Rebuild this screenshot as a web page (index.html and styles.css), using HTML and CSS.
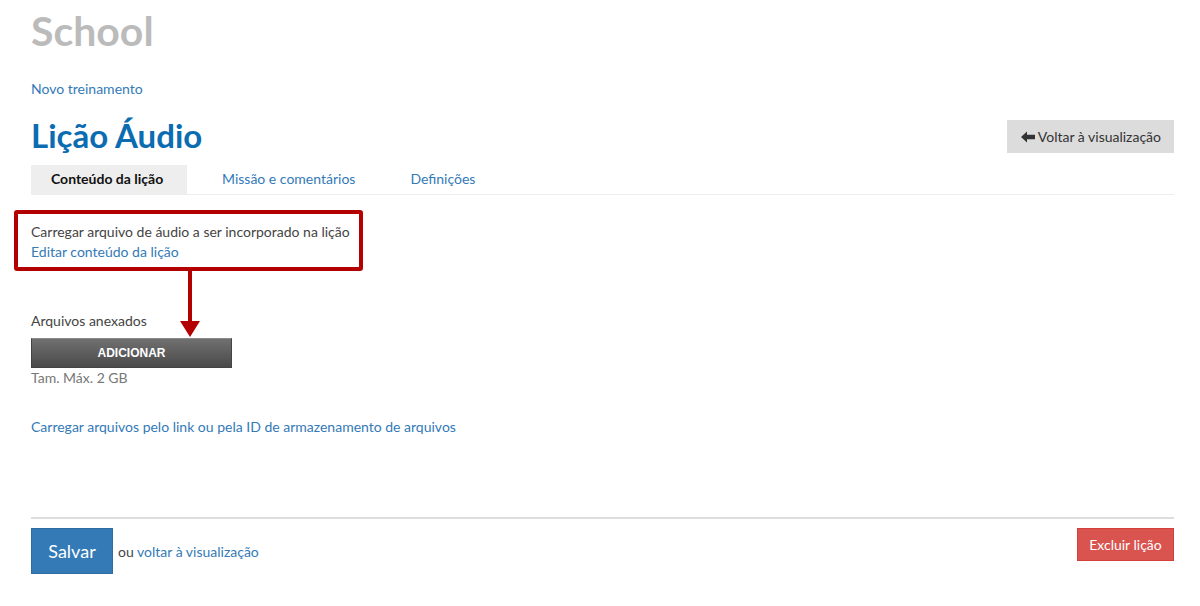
FILE: index.html
```html
<!DOCTYPE html>
<html lang="pt">
<head>
<meta charset="utf-8">
<title>Lição Áudio</title>
<link rel="stylesheet" href="styles.css">
</head>
<body>
<div class="page">
  <h1 class="brand">School</h1>
  <a class="crumb" href="#">Novo treinamento</a>
  <div class="title-row">
    <h2 class="lesson-title">Lição Áudio</h2>
    <a class="back-btn" href="#"><svg class="arrow-left" viewBox="0 0 14 12" width="14" height="12"><path d="M0 6 L6 0.5 L6 3.8 L14 3.8 L14 8.2 L6 8.2 L6 11.5 Z" fill="#333"/></svg>Voltar à visualização</a>
  </div>
  <nav class="tabs">
    <a class="tab active" href="#">Conteúdo da lição</a>
    <a class="tab" href="#">Missão e comentários</a>
    <a class="tab" href="#">Definições</a>
  </nav>
  <div class="content">
    <div class="intro">
      <p class="desc">Carregar arquivo de áudio a ser incorporado na lição</p>
      <a class="link" href="#">Editar conteúdo da lição</a>
      <div class="annot-box"></div>
      <div class="annot-stem"></div>
      <div class="annot-head"></div>
    </div>
    <div class="attachments">
      <p class="label">Arquivos anexados</p>
      <button class="add-btn" type="button">ADICIONAR</button>
      <p class="hint">Tam. Máx. 2 GB</p>
    </div>
    <a class="link upload-link" href="#">Carregar arquivos pelo link ou pela ID de armazenamento de arquivos</a>
  </div>
  <div class="footer">
    <div class="footer-left">
      <button class="save-btn" type="button">Salvar</button>
      <span class="or">ou <a class="link" href="#">voltar à visualização</a></span>
    </div>
    <button class="delete-btn" type="button">Excluir lição</button>
  </div>
</div>
</body>
</html>
```
FILE: styles.css
```css
* { box-sizing: border-box; }
html, body { margin: 0; padding: 0; background: #fff; }
body {
  font-family: Lato, "Liberation Sans", sans-serif;
  font-size: 14px;
  color: #444;
}
a { text-decoration: none; color: #337ab7; }
p { margin: 0; }
.page {
  width: 1143px;
  margin-left: 31px;
}
.brand {
  margin: 0;
  padding-top: 9px;
  font-size: 41px;
  line-height: 44px;
  font-weight: 700;
  color: #bbbbbb;
}
.crumb {
  display: block;
  margin-top: 27px;
  font-size: 14px;
  line-height: 18px;
}
.title-row {
  display: flex;
  justify-content: space-between;
  align-items: flex-start;
  margin-top: 19px;
}
.lesson-title {
  margin: 0;
  font-size: 33px;
  line-height: 36px;
  font-weight: 700;
  color: #0b6cb1;
}
.back-btn {
  display: flex;
  align-items: center;
  gap: 3px;
  height: 33px;
  margin-top: 3px;
  padding: 0 13px 0 14px;
  background: #dcdcdc;
  color: #333;
  font-size: 14px;
}
.tabs {
  display: flex;
  margin-top: 12px;
  border-bottom: 1px solid #eeeeee;
}
.tab {
  height: 29px;
  line-height: 28px;
  font-size: 14px;
}
.tab.active {
  background: #eeeeee;
  color: #111;
  font-weight: 700;
  width: 156px;
  padding: 0 0 0 20px;
  margin-right: 35px;
}
.tab:nth-child(2) { padding: 0 55px 0 0; }
.tab:nth-child(3) { padding: 0; }
.content { padding-top: 27px; }
.intro {
  position: relative;
  line-height: 20px;
}
.annot-box {
  position: absolute;
  left: -17px;
  top: -12px;
  width: 349px;
  height: 61px;
  border: 4px solid #b30000;
  border-radius: 3px;
}
.annot-stem {
  position: absolute;
  left: 157px;
  top: 46px;
  width: 4px;
  height: 56px;
  background: #b30000;
}
.annot-head {
  position: absolute;
  left: 149px;
  top: 99px;
  width: 0;
  height: 0;
  border-left: 10px solid transparent;
  border-right: 10px solid transparent;
  border-top: 16px solid #b30000;
}
.attachments { margin-top: 49px; }
.label { line-height: 20px; }
.add-btn {
  display: block;
  width: 201px;
  height: 30px;
  margin-top: 7px;
  border: 1px solid #444;
  border-top-color: #8a8a8a;
  background: linear-gradient(#707070, #4a4a4a);
  color: #fff;
  font-family: "Liberation Sans", Arial, sans-serif;
  font-weight: 700;
  font-size: 12px;
  cursor: pointer;
}
.hint { color: #777; line-height: 20px; }
.upload-link {
  display: block;
  margin-top: 29px;
  line-height: 20px;
}
.footer {
  display: flex;
  justify-content: space-between;
  align-items: flex-start;
  margin-top: 80px;
  padding-top: 9px;
  border-top: 2px solid #dddddd;
}
.footer-left {
  display: flex;
  align-items: center;
  gap: 5px;
}
.save-btn {
  width: 82px;
  height: 46px;
  border: 1px solid #2e6da4;
  background: #337ab7;
  color: #fff;
  font-family: Lato, "Liberation Sans", sans-serif;
  font-size: 18px;
}
.delete-btn {
  width: 97px;
  height: 33px;
  border: 1px solid #d43f3a;
  background: #d9534f;
  color: #fff;
  font-family: Lato, "Liberation Sans", sans-serif;
  font-size: 14px;
}
```
